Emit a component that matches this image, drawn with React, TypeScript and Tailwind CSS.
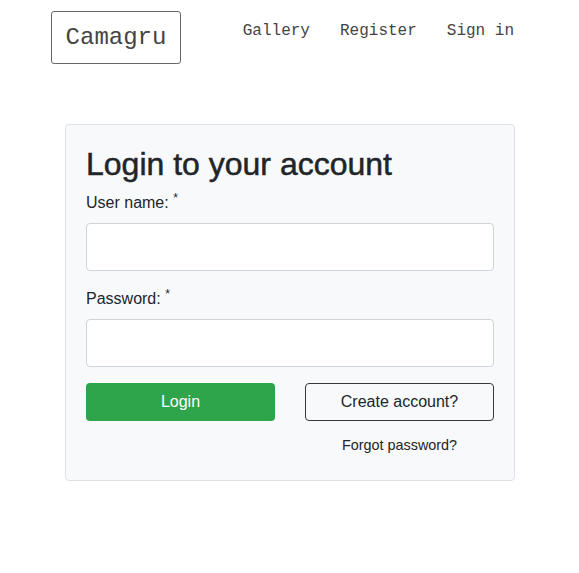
export default function App() {
  return (
    <div className="min-h-[573px] bg-white text-[#212529] font-['Liberation_Sans',Arial,sans-serif]">
      <header className="flex items-start justify-between pt-[11px] pl-[51px] pr-[65px]">
        <div className="flex h-[53px] w-[130px] items-center justify-center rounded-[3px] border border-[#666] font-['Liberation_Mono','Courier_New',monospace] text-[24px] text-[#444]">
          Camagru
        </div>
        <nav className="flex gap-[30px] pt-[8px] font-['Liberation_Mono','Courier_New',monospace] text-[16px] leading-[24px] text-[#444]">
          <a href="#">Gallery</a>
          <a href="#">Register</a>
          <a href="#">Sign in</a>
        </nav>
      </header>

      <main className="mt-[60px] pl-[65px]">
        <div className="w-[450px] rounded-[4px] border border-[#dee2e6] bg-[#f8f9fa] px-[20px] pt-[20px] pb-[24px]">
          <h2 className="mb-[8px] text-[32px] font-medium leading-[38px] [-webkit-text-stroke:0.5px_#212529]">
            Login to your account
          </h2>

          <label className="mb-[8px] block text-[16px] leading-[24px]">
            User name: <sup>*</sup>
          </label>
          <input
            type="text"
            className="mb-[16px] block h-[48px] w-full rounded-[4px] border border-[#ced4da] bg-white px-3"
          />

          <label className="mb-[8px] block text-[16px] leading-[24px]">
            Password: <sup>*</sup>
          </label>
          <input
            type="password"
            className="mb-[16px] block h-[48px] w-full rounded-[4px] border border-[#ced4da] bg-white px-3"
          />

          <div className="grid grid-cols-2 gap-x-[30px]">
            <button className="h-[38px] rounded-[4px] bg-[#2ea44b] text-[16px] text-white">Login</button>
            <button className="h-[38px] rounded-[4px] border border-[#343a40] text-[16px] text-[#212529]">
              Create account?
            </button>
            <div />
            <a href="#" className="mt-[13px] block text-center text-[14.4px] leading-[22px] text-[#212529]">
              Forgot password?
            </a>
          </div>
        </div>
      </main>
    </div>
  )
}
